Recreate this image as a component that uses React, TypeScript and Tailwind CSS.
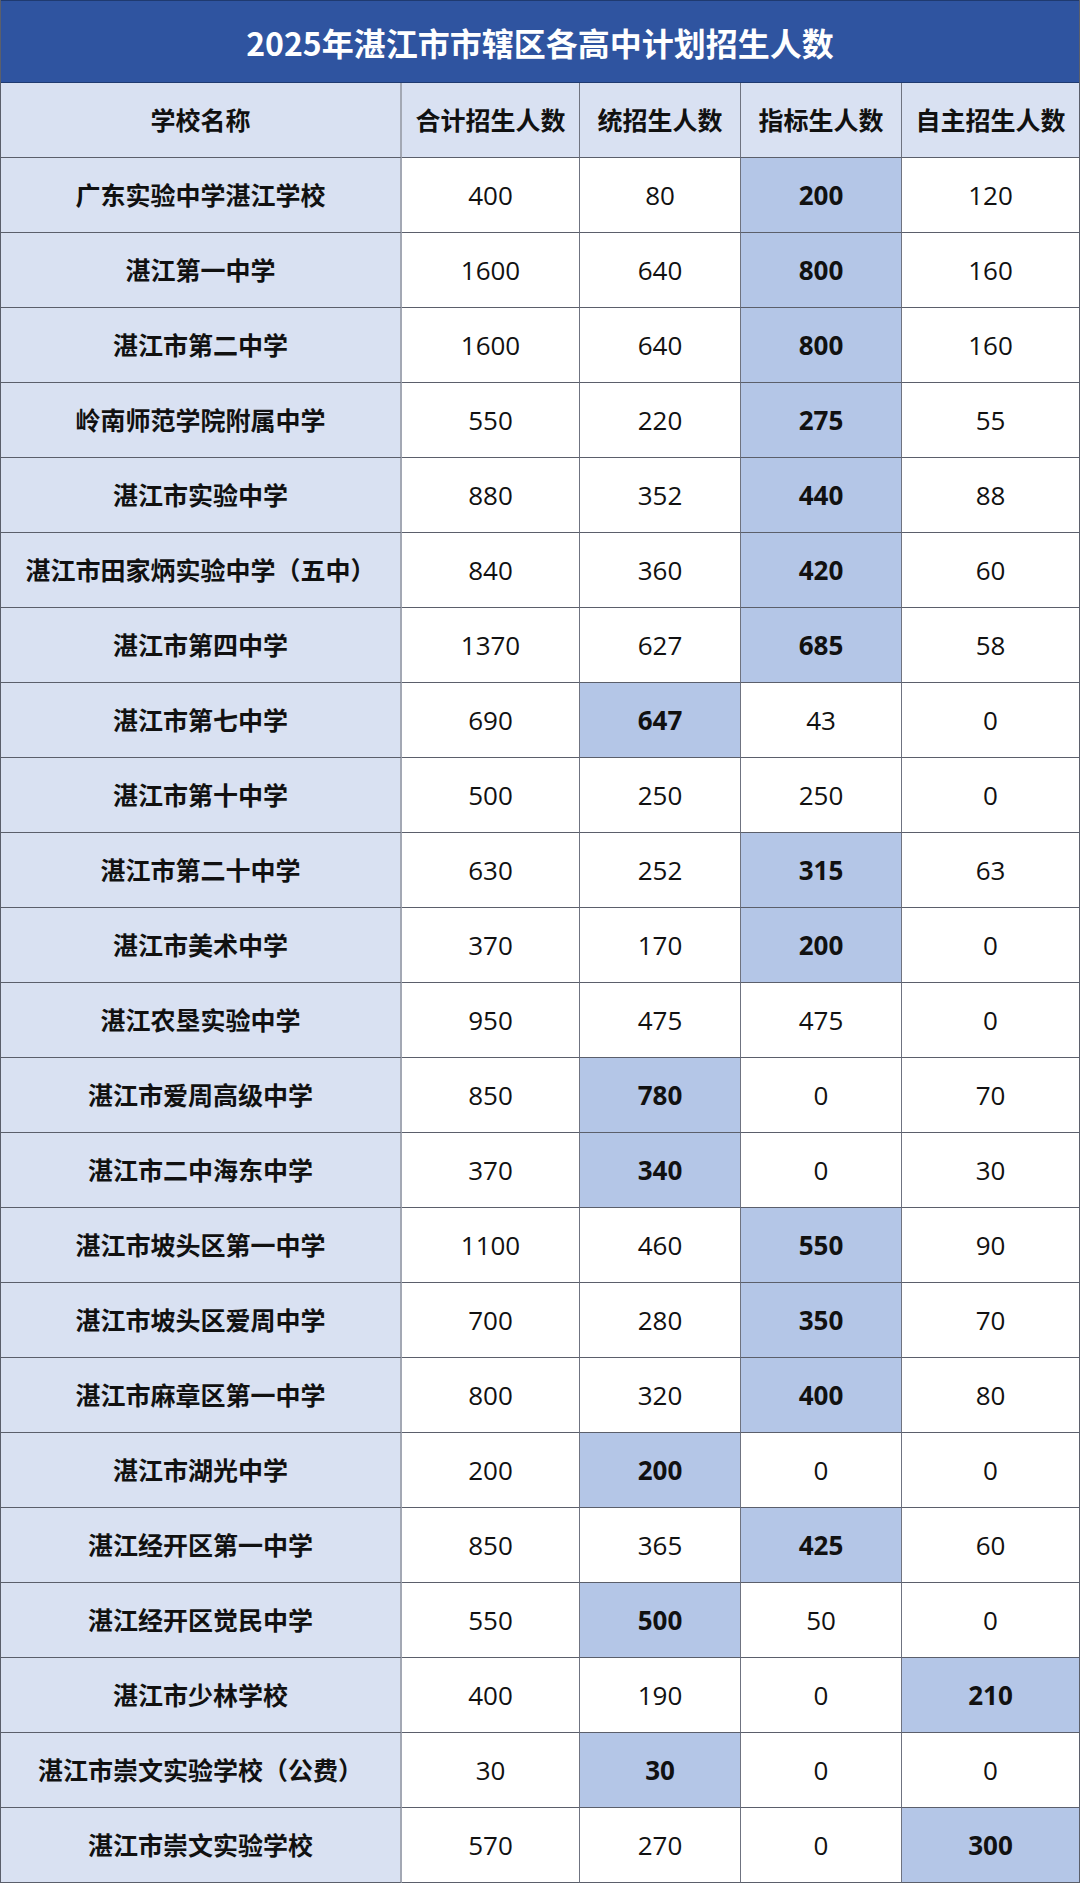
import React from 'react';

type Row = { name: string; values: number[]; hl: number | null };

const rows: Row[] = [
  { name: '广东实验中学湛江学校', values: [400, 80, 200, 120], hl: 2 },
  { name: '湛江第一中学', values: [1600, 640, 800, 160], hl: 2 },
  { name: '湛江市第二中学', values: [1600, 640, 800, 160], hl: 2 },
  { name: '岭南师范学院附属中学', values: [550, 220, 275, 55], hl: 2 },
  { name: '湛江市实验中学', values: [880, 352, 440, 88], hl: 2 },
  { name: '湛江市田家炳实验中学（五中）', values: [840, 360, 420, 60], hl: 2 },
  { name: '湛江市第四中学', values: [1370, 627, 685, 58], hl: 2 },
  { name: '湛江市第七中学', values: [690, 647, 43, 0], hl: 1 },
  { name: '湛江市第十中学', values: [500, 250, 250, 0], hl: null },
  { name: '湛江市第二十中学', values: [630, 252, 315, 63], hl: 2 },
  { name: '湛江市美术中学', values: [370, 170, 200, 0], hl: 2 },
  { name: '湛江农垦实验中学', values: [950, 475, 475, 0], hl: null },
  { name: '湛江市爱周高级中学', values: [850, 780, 0, 70], hl: 1 },
  { name: '湛江市二中海东中学', values: [370, 340, 0, 30], hl: 1 },
  { name: '湛江市坡头区第一中学', values: [1100, 460, 550, 90], hl: 2 },
  { name: '湛江市坡头区爱周中学', values: [700, 280, 350, 70], hl: 2 },
  { name: '湛江市麻章区第一中学', values: [800, 320, 400, 80], hl: 2 },
  { name: '湛江市湖光中学', values: [200, 200, 0, 0], hl: 1 },
  { name: '湛江经开区第一中学', values: [850, 365, 425, 60], hl: 2 },
  { name: '湛江经开区觉民中学', values: [550, 500, 50, 0], hl: 1 },
  { name: '湛江市少林学校', values: [400, 190, 0, 210], hl: 3 },
  { name: '湛江市崇文实验学校（公费）', values: [30, 30, 0, 0], hl: 1 },
  { name: '湛江市崇文实验学校', values: [570, 270, 0, 300], hl: 3 },
];

const headers = ['合计招生人数', '统招生人数', '指标生人数', '自主招生人数'];

const cjk = "font-['Noto_Sans_CJK_SC',sans-serif]";
const num = "font-['Open_Sans','Noto_Sans_CJK_SC',sans-serif]";

export default function App() {
  return (
    <div className="w-[1080px] h-[1883px] bg-white overflow-hidden">
      <div className="border-x border-[#5b5f6b]">
        {/* Title */}
        <div
          className={`h-[83px] flex items-center justify-center bg-[#2f54a0] border-t border-b border-[#1f3a70] text-white text-[32px] font-bold ${cjk}`}
        >
          2025年湛江市市辖区各高中计划招生人数
        </div>

        <div className="grid grid-cols-[401px_178px_161px_161px_177px]">
          {/* Header */}
          <div
            className={`h-[75px] flex items-center justify-center bg-[#d9e1f2] border-b border-r-2 border-b-[#5b5f6b] border-r-[#a3a8b4] text-[25px] font-bold text-[#111] ${cjk}`}
          >
            学校名称
          </div>
          {headers.map((h, i) => (
            <div
              key={h}
              className={`h-[75px] flex items-center justify-center bg-[#d9e1f2] border-b border-b-[#5b5f6b] text-[25px] font-bold text-[#111] ${cjk} ${
                i < 3 ? 'border-r border-r-[#6f7380]' : ''
              }`}
            >
              {h}
            </div>
          ))}

          {/* Rows */}
          {rows.map((row) => (
            <React.Fragment key={row.name}>
              <div
                className={`h-[75px] flex items-center justify-center bg-[#d9e1f2] border-b border-r-2 border-b-[#5b5f6b] border-r-[#a3a8b4] text-[25px] font-bold text-[#111] ${cjk}`}
              >
                {row.name}
              </div>
              {row.values.map((v, i) => (
                <div
                  key={i}
                  className={`h-[75px] flex items-center justify-center border-b border-b-[#5b5f6b] text-[26px] text-[#111] ${num} ${
                    i < 3 ? 'border-r border-r-[#6f7380]' : ''
                  } ${row.hl === i ? 'bg-[#b4c6e7] font-bold' : 'bg-white'}`}
                >
                  {v}
                </div>
              ))}
            </React.Fragment>
          ))}
        </div>
      </div>
    </div>
  );
}
